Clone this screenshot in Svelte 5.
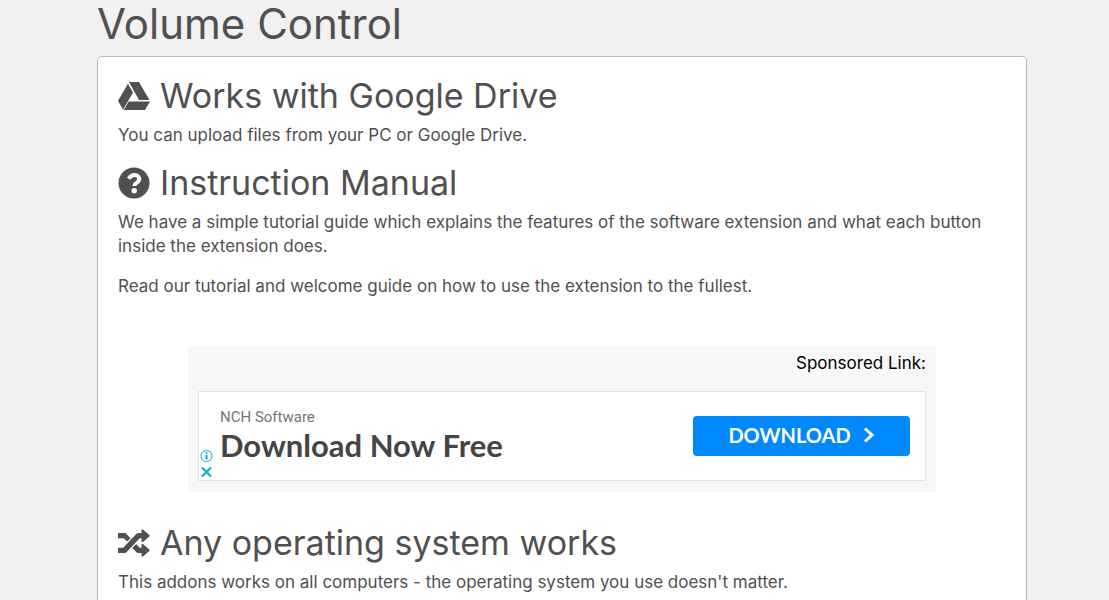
<script>
  const icons = {
    drive: 'M11 0h10l10.500 18h-10.500zM10 1.700l5 8.700-10 17.300-5-8.900zM10.700 19.500h21.300l-5 8.500h-21.200z',
    shuffle: 'M0 4H7.500L12.500 9.200L9.400 12.500L5.600 9.300H0zM0 18.700H5.200L18 5.200Q19.200 4 20.800 4H23.500V1.500Q23.500-.5 25.200.7L31.300 5.900Q32 6.700 31.300 7.500L25.200 12.800Q23.500 14 23.500 12V9.300H21.700L8.900 22.800Q7.700 24 6.300 24H0zM14.900 18.300L18.200 14.900L21.700 18.700H23.500V16Q23.500 14 25.200 15.200L31.300 20.500Q32 21.300 31.300 22.100L25.200 27.300Q23.500 28.500 23.500 26.500V24H20.500Q19 24 18 22.800L14.300 19z'
  };
</script>

<div class="page">
  <h1>Volume Control</h1>
  <main>
    <section>
      <h2>
        <svg width="32" height="28" viewBox="0 0 32 28" aria-hidden="true"><path d={icons.drive} /></svg>
        Works with Google Drive
      </h2>
      <p>You can upload files from your PC or Google Drive.</p>
    </section>
    <section>
      <h2>
        <svg width="32" height="32" viewBox="0 0 32 32" aria-hidden="true">
          <circle cx="16" cy="16" r="15.500" />
          <path class="mark" d="M10.700 11.800C12.300 8.900 14 8 16.400 8C19.300 8 21.300 9.700 21.300 12.200C21.300 15.700 16.300 15.500 16.300 19" />
          <circle class="dot" cx="16.200" cy="23.800" r="2.700" />
        </svg>
        Instruction Manual
      </h2>
      <p>
        We have a simple tutorial guide which explains the features of the software extension and what each button
        inside the extension does.
      </p>
      <p>Read our tutorial and welcome guide on how to use the extension to the fullest.</p>
    </section>

    <aside>
      <div class="label">Sponsored Link:</div>
      <div class="ad">
        <div class="copy">
          <div class="brand">NCH Software</div>
          <div class="headline">Download Now Free</div>
        </div>
        <button class="download" type="button">
          DOWNLOAD
          <svg width="12" height="16" viewBox="0 0 12 16" aria-hidden="true"><path d="M2 1.500L9 8L2 14.500" /></svg>
        </button>
        <div class="choices">
          <button type="button" aria-label="Ad information">
            <svg width="14" height="14" viewBox="0 0 14 14"><circle cx="7.500" cy="7" r="5.500" /><path class="info" d="M7.500 6v4.500M7.500 3.300v1.500" /></svg>
          </button>
          <button type="button" aria-label="Close ad">
            <svg width="14" height="14" viewBox="0 0 14 14"><path class="cross" d="M3 2.500l9 9M12 2.500l-9 9" /></svg>
          </button>
        </div>
      </div>
    </aside>

    <section>
      <h2>
        <svg width="32" height="28" viewBox="0 0 32 28" aria-hidden="true"><path d={icons.shuffle} /></svg>
        Any operating system works
      </h2>
      <p>This addons works on all computers - the operating system you use doesn't matter.</p>
    </section>
  </main>
</div>

<style>
  :global(html) {
    scrollbar-width: none;
  }
  :global(body) {
    margin: 0;
    background: #f1f1f1;
  }
  .page {
    padding: 0 82px 0 97px;
    font: 17px/24px Inter, "Liberation Sans", sans-serif;
    color: #505050;
  }
  h1 {
    margin: 0 0 8px;
    font-size: 42px;
    line-height: 48px;
    font-weight: 400;
  }
  main {
    padding: 17px 20px;
    background: #fff;
    border: 1px solid #bbb;
    border-radius: 5px;
  }
  h2 {
    display: flex;
    align-items: center;
    gap: 10px;
    margin: 0 0 6px;
    font-size: 34px;
    line-height: 43px;
    font-weight: 400;
  }
  h2 svg {
    flex: none;
    fill: #505050;
  }
  h2 .mark {
    fill: none;
    stroke: #fff;
    stroke-width: 4;
  }
  h2 .dot {
    fill: #fff;
  }
  p {
    margin: 0 0 16px;
  }
  section p:last-child {
    margin-bottom: 14px;
  }
  aside {
    margin: 48px 70px 29px;
    padding: 5px 10px 11px;
    background: #f7f7f7;
  }
  .label {
    margin-bottom: 16px;
    text-align: right;
    color: #000;
  }
  .ad {
    position: relative;
    display: flex;
    align-items: center;
    justify-content: space-between;
    min-height: 88px;
    padding: 0 15px 0 21px;
    background: #fff;
    border: 1px solid #e3e3e3;
  }
  .brand {
    font: 15px/20px Roboto, sans-serif;
    color: #757575;
  }
  .headline {
    font: 700 31px/36px Lato, sans-serif;
    color: #444;
    padding-bottom: 2px;
  }
  .download {
    display: flex;
    align-items: center;
    justify-content: center;
    gap: 12px;
    width: 217px;
    height: 40px;
    padding: 0 0 2px;
    border: 0;
    border-radius: 4px;
    background: #08f;
    color: #fff;
    font: 700 20px/24px Lato, sans-serif;
  }
  .download svg {
    fill: none;
    stroke: #fff;
    stroke-width: 3;
  }
  .choices {
    position: absolute;
    left: 0;
    bottom: 1px;
    display: grid;
    gap: 2px;
  }
  .choices button {
    display: block;
    padding: 0;
    border: 0;
    background: none;
    height: 14px;
  }
  .choices svg {
    display: block;
    fill: none;
    stroke: #00aecd;
  }
  .choices .info,
  .choices .cross {
    stroke-width: 2;
  }
</style>
